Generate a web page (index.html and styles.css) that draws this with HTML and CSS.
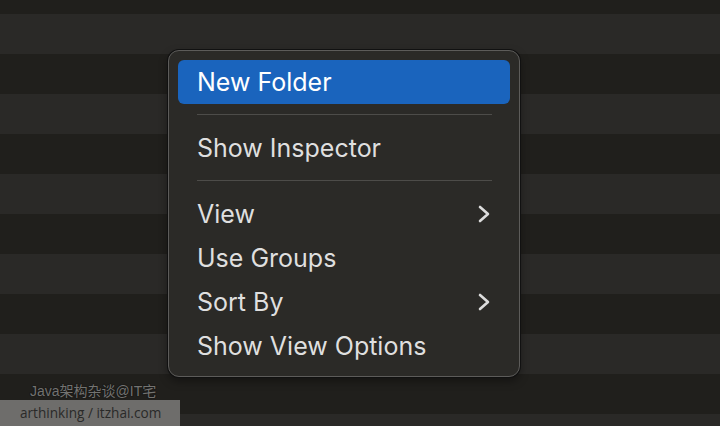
FILE: index.html
```html
<!DOCTYPE html>
<html lang="en">
<head>
    <meta charset="UTF-8">
    <title>Context Menu</title>
    <link rel="stylesheet" href="styles.css">
</head>
<body>
    <div class="desktop">
        <div class="menu">
            <div class="menu-item selected">New Folder</div>
            <div class="separator"></div>
            <div class="menu-item">Show Inspector</div>
            <div class="separator"></div>
            <div class="menu-item">View
                <svg class="chevron" width="12" height="18" viewBox="0 0 12 18"><path d="M2 2 L10 9 L2 16" /></svg>
            </div>
            <div class="menu-item">Use Groups</div>
            <div class="menu-item">Sort By
                <svg class="chevron" width="12" height="18" viewBox="0 0 12 18"><path d="M2 2 L10 9 L2 16" /></svg>
            </div>
            <div class="menu-item">Show View Options</div>
        </div>

        <div class="watermark">Java架构杂谈@IT宅</div>
        <div class="credit">arthinking / itzhai.com</div>
    </div>
</body>
</html>
```

FILE: styles.css
```css
body {
    margin: 0;
    font-family: 'Inter', 'Liberation Sans', sans-serif;
}
.desktop {
    position: relative;
    width: 720px;
    height: 426px;
    overflow: hidden;
    background-color: #201f1c;
    background-image: linear-gradient(
        to bottom,
        #2a2927 0px,
        #2a2927 40px,
        #201f1c 40px,
        #201f1c 80px
    );
    background-size: 100% 80px;
    background-position: 0 14px;
    padding: 50px 0 0 168px;
    box-sizing: border-box;
}
.menu {
    width: 352px;
    box-sizing: border-box;
    padding: 9px 9px 8px 9px;
    background-color: #2b2a27;
    border: 1px solid #5d5c5a;
    border-radius: 11px;
    box-shadow: 0 0 0 1px #111, 0 4px 10px rgba(0, 0, 0, 0.4);
}
.menu-item {
    display: flex;
    align-items: center;
    justify-content: space-between;
    height: 44px;
    padding: 0 20px 0 19px;
    border-radius: 6px;
    font-size: 25px;
    color: #dfdfdf;
}
.menu-item.selected {
    background-color: #1a64bd;
    color: #fff;
}
.separator {
    height: 1px;
    margin: 10px 18px 11px 19px;
    background-color: #4d4c49;
}
.chevron path {
    fill: none;
    stroke: #dcdcdc;
    stroke-width: 2.6;
    stroke-linecap: round;
    stroke-linejoin: round;
}
.watermark {
    position: absolute;
    left: 30px;
    top: 380px;
    font-size: 14px;
    font-family: 'Liberation Sans', 'Noto Sans CJK SC', sans-serif;
    color: #737371;
    text-shadow: 0 0 1px #111, 0 0 1px #111;
}
.credit {
    position: absolute;
    left: 0;
    top: 400px;
    width: 180px;
    height: 26px;
    padding-left: 20px;
    box-sizing: border-box;
    background-color: #6e6d6b;
    color: #2a2a29;
    font-size: 13.6px;
    line-height: 26px;
    font-family: 'Open Sans', sans-serif;
}
```
